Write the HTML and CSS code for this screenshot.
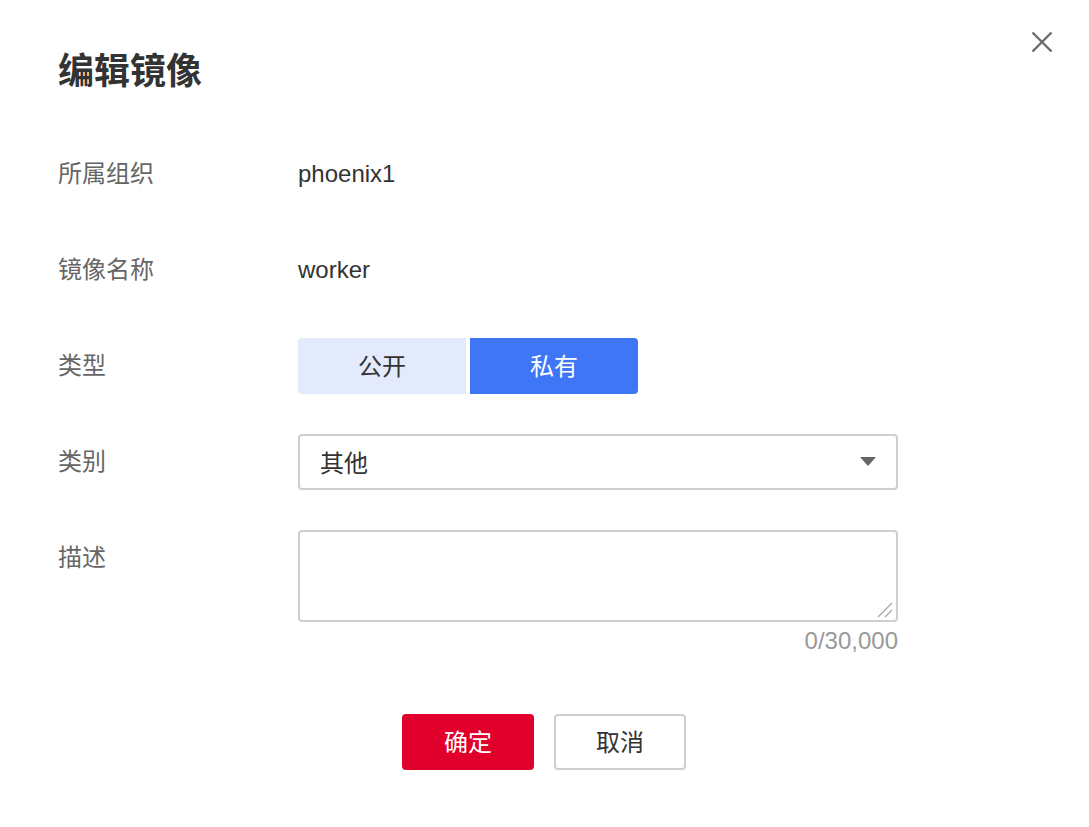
FILE: index.html
```html
<!DOCTYPE html>
<html lang="zh-CN">
<head>
<meta charset="utf-8">
<title>编辑镜像</title>
<link rel="stylesheet" href="styles.css">
</head>
<body>
<div class="dialog">
  <button class="close" aria-label="关闭">
    <svg width="22" height="22" viewBox="0 0 22 22"><path d="M1.5 1.5 L20.5 20.5 M20.5 1.5 L1.5 20.5" stroke="#6b6b6b" stroke-width="2.4" fill="none"/></svg>
  </button>
  <h1 class="title">编辑镜像</h1>
  <div class="form">
    <div class="row">
      <div class="label">所属组织</div>
      <div class="value">phoenix1</div>
    </div>
    <div class="row">
      <div class="label">镜像名称</div>
      <div class="value">worker</div>
    </div>
    <div class="row">
      <div class="label">类型</div>
      <div class="toggle">
        <span class="opt">公开</span>
        <span class="opt active">私有</span>
      </div>
    </div>
    <div class="row">
      <div class="label">类别</div>
      <div class="select">
        <span>其他</span>
        <span class="caret"></span>
      </div>
    </div>
    <div class="row row-top">
      <div class="label">描述</div>
      <div class="field">
        <div class="textarea-wrap">
          <textarea class="textarea"></textarea>
          <svg class="grip" width="16" height="16" viewBox="0 0 16 16"><path d="M1 15 L15 1 M8 15 L15 8" stroke="#aaa" stroke-width="1.4" fill="none"/></svg>
        </div>
        <div class="counter">0/30,000</div>
      </div>
    </div>
  </div>
  <div class="actions">
    <button class="btn primary">确定</button>
    <button class="btn">取消</button>
  </div>
</div>
</body>
</html>
```
FILE: styles.css
```css
html, body {
  margin: 0;
  padding: 0;
  background: #fff;
}
body {
  font-family: "Liberation Sans", "Noto Sans CJK SC", sans-serif;
  color: #333;
}
.dialog {
  position: relative;
  width: 1089px;
  height: 827px;
  box-sizing: border-box;
  padding: 48px 0 0 58px;
}
.close {
  position: absolute;
  top: 31px;
  right: 36px;
  width: 22px;
  height: 22px;
  padding: 0;
  border: 0;
  background: none;
  cursor: pointer;
}
.close svg { display: block; }
.title {
  margin: 0;
  font-size: 36px;
  line-height: 48px;
  font-weight: bold;
  color: #333;
}
.form {
  margin-top: 50px;
  display: flex;
  flex-direction: column;
  gap: 40px;
}
.row {
  display: flex;
  align-items: center;
  min-height: 56px;
}
.row-top { align-items: flex-start; }
.label {
  width: 240px;
  flex: none;
  font-size: 24px;
  line-height: 56px;
  color: #666;
}
.value {
  font-size: 24px;
  line-height: 56px;
  color: #333;
}
.toggle {
  display: flex;
  gap: 4px;
}
.opt {
  width: 168px;
  height: 56px;
  display: flex;
  align-items: center;
  justify-content: center;
  padding-bottom: 3px;
  box-sizing: border-box;
  font-size: 24px;
  background: #e3eafb;
  color: #333;
  border-radius: 4px 0 0 4px;
}
.opt.active {
  background: #3e76f6;
  color: #fff;
  border-radius: 0 4px 4px 0;
}
.select {
  width: 600px;
  height: 56px;
  box-sizing: border-box;
  border: 2px solid #cfcfcf;
  border-radius: 4px;
  display: flex;
  align-items: center;
  justify-content: space-between;
  padding: 0 20px 2px 20px;
  font-size: 24px;
  color: #333;
}
.caret {
  width: 0;
  height: 0;
  border-left: 8px solid transparent;
  border-right: 8px solid transparent;
  border-top: 9px solid #666;
  margin-top: 1px;
}
.field {
  width: 600px;
  display: flex;
  flex-direction: column;
}
.textarea-wrap {
  position: relative;
}
.textarea {
  width: 600px;
  height: 92px;
  box-sizing: border-box;
  border: 2px solid #cfcfcf;
  border-radius: 4px;
  margin: 0;
  padding: 10px 20px;
  font-family: inherit;
  font-size: 24px;
  resize: none;
  display: block;
}
.grip {
  position: absolute;
  right: 5px;
  bottom: 4px;
  pointer-events: none;
}
.counter {
  margin-top: 5px;
  text-align: right;
  font-size: 24px;
  line-height: 28px;
  color: #999;
}
.actions {
  margin-top: 59px;
  margin-left: -59px;
  display: flex;
  justify-content: center;
  gap: 20px;
}
.btn {
  width: 132px;
  height: 56px;
  box-sizing: border-box;
  border: 2px solid #cfcfcf;
  border-radius: 4px;
  background: #fff;
  color: #333;
  font-family: inherit;
  font-size: 24px;
  padding: 0 0 3px;
  cursor: pointer;
}
.btn.primary {
  background: #e1002b;
  border-color: #e1002b;
  color: #fff;
}
```
